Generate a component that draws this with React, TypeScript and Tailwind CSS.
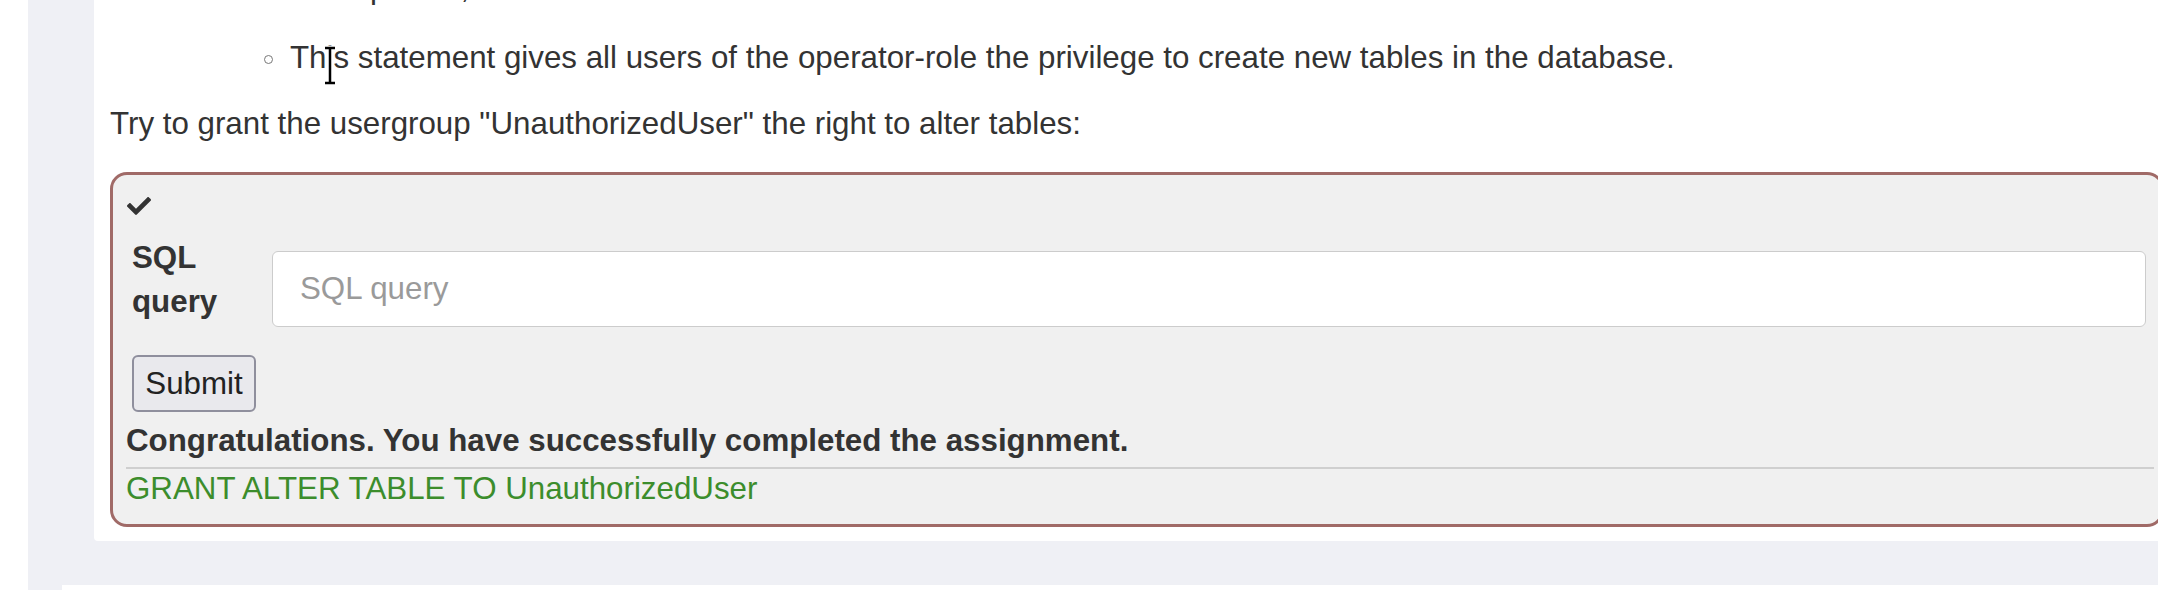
import React from "react";
import { FaCheck } from "react-icons/fa";

export default function App() {
  return (
    <div className="relative flex h-[590px] w-[2158px] overflow-hidden bg-white font-['Liberation_Sans',Arial,sans-serif] text-[31.3px] text-[#333]">
      <div className="w-[28px] shrink-0 bg-white" />
      <div className="flex-1 bg-[#eff0f5] pl-[34px]">
        <div className="ml-[32px] w-[2100px] rounded-b-[4px] bg-white pb-[14px] pl-[16px]">
          <div className="-mt-[34px]">
            <div className="pl-[180px] leading-[44px] whitespace-nowrap">Example: all,</div>
            <div className="mt-[26px] flex items-center pl-[154px] leading-[44px] whitespace-nowrap">
              <span className="mt-[3px] inline-block h-[9px] w-[9px] rounded-full border border-[#777]" />
              <span className="ml-[17px]">
                This statement gives all users of the operator-role the privilege to create new tables in the database.
              </span>
            </div>
            <div className="mt-[22px] leading-[44px] whitespace-nowrap">
              Try to grant the usergroup "UnauthorizedUser" the right to alter tables:
            </div>
          </div>
          <div className="mt-[26px] w-[2054px] rounded-[17px] border-[3px] border-[#a06a67] bg-[#f0f0f0] pb-[15px] pl-[13px] pr-[7px] pt-[20px]">
            <div className="ml-[1px] h-[22px] text-[#333]">
              <FaCheck size={24} className="-mt-[1px]" />
            </div>
            <div className="mt-[20px] flex items-start pl-[6px]">
              <label className="w-[125px] shrink-0 font-bold leading-[44px]">SQL query</label>
              <input
                className="mr-[8px] mt-[15px] ml-[15px] h-[76px] flex-1 rounded-[6px] border border-[#cccccc] bg-white pl-[27px] text-[31.3px] text-[#333] outline-none placeholder:text-[#9a9a9a]"
                placeholder="SQL query"
              />
            </div>
            <button className="ml-[6px] mt-[28px] block h-[57px] w-[124px] rounded-[6px] border-2 border-[#8f8f9d] bg-[#e9e9ed] text-[31.3px] leading-[53px] text-[#222]">
              Submit
            </button>
            <div className="mt-[7px] font-bold leading-[44px] whitespace-nowrap">
              Congratulations. You have successfully completed the assignment.
            </div>
            <div className="mt-[4px] h-[2px] bg-[#cfcfcf]" />
            <div className="leading-[40px] text-[#3c8d2c] whitespace-nowrap">GRANT ALTER TABLE TO UnauthorizedUser</div>
          </div>
        </div>
        <div className="mt-[44px] h-[20px] w-[2200px] bg-white" />
      </div>
      <svg className="absolute left-[321px] top-[44px]" width="18" height="44" viewBox="0 0 18 44">
        <g stroke="#fff" strokeWidth="5" strokeLinecap="round" fill="none">
          <path d="M4 4 L14 4 M9 4 L9 39 M4 39 L14 39" />
        </g>
        <g stroke="#000" strokeWidth="2.5" fill="none">
          <path d="M4 4 L14 4 M9 4 L9 39 M4 39 L14 39" />
        </g>
      </svg>
    </div>
  );
}
